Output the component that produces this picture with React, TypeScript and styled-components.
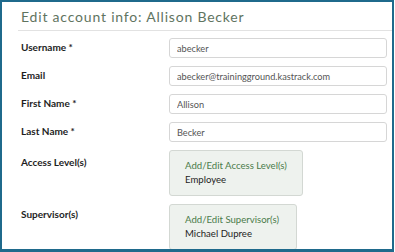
import React from 'react'
import styled, { createGlobalStyle } from 'styled-components'

const GlobalStyle = createGlobalStyle`
  html, body {
    margin: 0;
    padding: 0;
    background: #ffffff;
  }
  body {
    font-family: Lato, 'Open Sans', sans-serif;
  }
`

type Field = { label: string; value: string }

const textFields: Field[] = [
  { label: 'Username *', value: 'abecker' },
  { label: 'Email', value: 'abecker@trainingground.kastrack.com' },
  { label: 'First Name *', value: 'Allison' },
  { label: 'Last Name *', value: 'Becker' },
]

const pickers = [
  { label: 'Access Level(s)', action: 'Add/Edit Access Level(s)', value: 'Employee', width: 134, labelTop: 5 },
  { label: 'Supervisor(s)', action: 'Add/Edit Supervisor(s)', value: 'Michael Dupree', width: 128, labelTop: 3 },
]

export default function App() {
  return (
    <>
      <GlobalStyle />
      <Panel>
        <Header>Edit account info: Allison Becker</Header>
        <Form>
          {textFields.map((f) => (
            <React.Fragment key={f.label}>
              <Label $top={2}>{f.label}</Label>
              <Input value={f.value} readOnly />
            </React.Fragment>
          ))}
          {pickers.map((p) => (
            <React.Fragment key={p.label}>
              <Label $top={p.labelTop}>{p.label}</Label>
              <Picker $width={p.width}>
                <PickerAction>{p.action}</PickerAction>
                <PickerValue>{p.value}</PickerValue>
              </Picker>
            </React.Fragment>
          ))}
        </Form>
      </Panel>
    </>
  )
}

const Panel = styled.div`
  width: 394px;
  height: 252px;
  box-sizing: border-box;
  border: 2px solid #1f6a8c;
  border-bottom-width: 3px;
  overflow: hidden;
  padding: 0 5px 0 16px;
  background: #ffffff;
`

const Header = styled.h1`
  margin: 0 -5px 0 0;
  padding: 6px 0 4px 3px;
  font-size: 14px;
  font-weight: 400;
  letter-spacing: 0.8px;
  color: #5f745f;
  border-bottom: 1px solid #e2e2e2;
  line-height: 18px;
`

const Form = styled.div`
  display: grid;
  grid-template-columns: 148px 1fr;
  row-gap: 8px;
  padding: 7px 0 0 3px;
`

const Label = styled.div<{ $top: number }>`
  padding-top: ${(p) => p.$top}px;
  font-size: 10px;
  font-weight: 700;
  color: #1e1e1e;
  line-height: 14px;
`

const Input = styled.input`
  box-sizing: border-box;
  width: 100%;
  height: 20px;
  border: 1px solid #d6d6d6;
  border-radius: 3px;
  padding: 0 7px;
  font-family: Lato, 'Open Sans', sans-serif;
  font-size: 9.2px;
  color: #555555;
  background: #ffffff;
  outline: none;
`

const Picker = styled.div<{ $width: number }>`
  box-sizing: border-box;
  width: ${(p) => p.$width}px;
  height: 46px;
  padding: 8px 0 0 15px;
  background: #eef2ee;
  border: 1px solid #d3d8d3;
  border-radius: 3px;
  display: flex;
  flex-direction: column;
`

const PickerAction = styled.div`
  font-size: 9.6px;
  color: #4a7b4a;
  line-height: 14px;
  white-space: nowrap;
`

const PickerValue = styled.div`
  font-size: 9.6px;
  color: #1e1e1e;
  line-height: 14px;
  white-space: nowrap;
`
